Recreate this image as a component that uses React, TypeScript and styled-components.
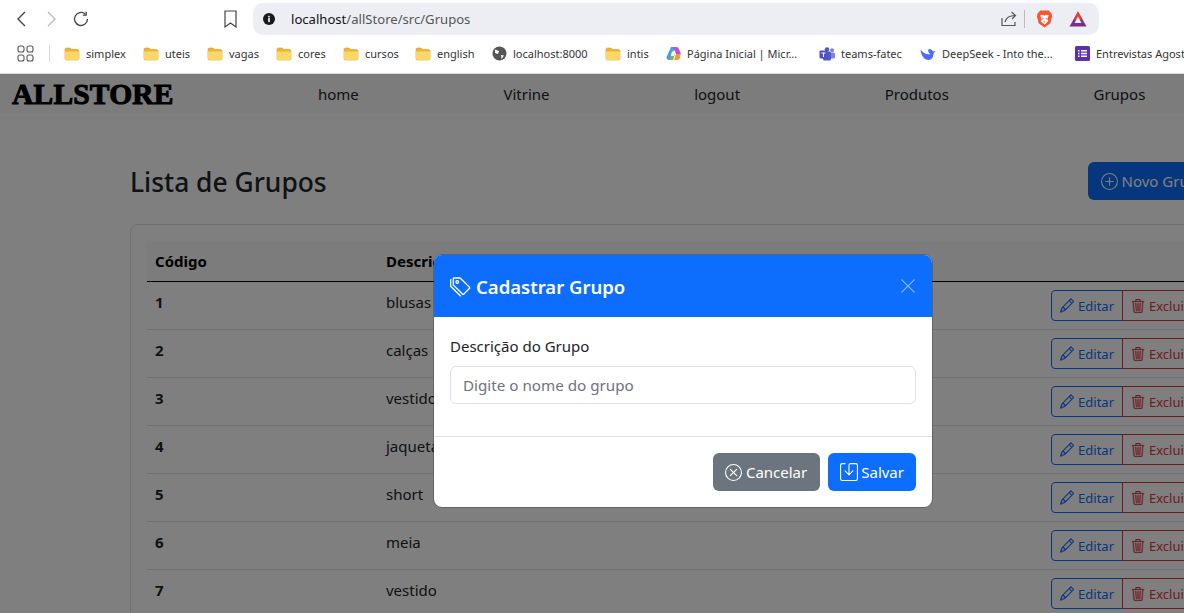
import { createGlobalStyle } from "styled-components";
import styled from "styled-components";
import { BsPencil, BsPlusCircle, BsSave, BsTags, BsTrash3, BsXCircle, BsXLg } from "react-icons/bs";

const GlobalStyle = createGlobalStyle`
  html, body {
    margin: 0;
    height: 100%;
    overflow: hidden;
    background: #fff;
  }
  body {
    font-family: "Noto Sans", "Liberation Sans", sans-serif;
  }
`;

const Shell = styled.div`
  width: 1184px;
  height: 613px;
  display: flex;
  flex-direction: column;
  overflow: hidden;
`;

const Toolbar = styled.div`
  height: 38px;
  flex: none;
  display: flex;
  align-items: center;
  padding-left: 14px;
  background: #fff;
`;

const NavButtons = styled.div`
  width: 239px;
  display: flex;
  align-items: center;
  gap: 13px;
`;

const BookmarkStar = styled.svg`
  margin-left: auto;
  margin-right: 16px;
`;

const AddressBar = styled.div`
  width: 846px;
  height: 32px;
  border-radius: 10px;
  background: #edeef3;
  display: flex;
  align-items: center;
  padding: 0 12px 0 10px;
  box-sizing: border-box;
  font-size: 13.1px;
  color: #555;
`;

const Url = styled.span`
  margin-left: 16px;
  flex: 1;
  b {
    font-weight: 400;
    color: #111;
  }
`;

const BarDivider = styled.span`
  width: 1px;
  height: 18px;
  background: #bbb;
  margin: 0 11px 0 6px;
`;

const TriangleLogo = styled.svg`
  margin-left: 16px;
`;

const Bookmarks = styled.div`
  height: 36px;
  flex: none;
  display: flex;
  align-items: center;
  padding: 0 0 4px 17px;
  background: #fff;
  border-bottom: 1px solid #d9d9d9;
  box-sizing: border-box;
  font-size: 11px;
  color: #333;
  white-space: nowrap;
  svg {
    flex: none;
  }
`;

const AppsIcon = styled.svg`
  margin-right: 15px;
`;

const BookmarkSeparator = styled.span`
  width: 1px;
  height: 17px;
  flex: none;
  background: #d5d5d5;
  margin-right: 14px;
`;

const BookmarkItem = styled.span<{ $w: number }>`
  width: ${(p) => p.$w}px;
  flex: none;
  display: flex;
  align-items: center;
  gap: 6px;
`;

const Page = styled.div`
  position: relative;
  flex: 1;
  background: #fff;
  overflow: hidden;
  color: #212529;
`;

const Navbar = styled.nav`
  height: 39px;
  display: flex;
  align-items: center;
  padding-left: 12px;
  background: #f8f9fa;
`;

const Logo = styled.span`
  width: 306px;
  flex: none;
  margin-top: 2px;
  font-family: "Liberation Serif", serif;
  font-weight: 700;
  font-size: 29.5px;
  letter-spacing: 0.2px;
  color: #000;
  -webkit-text-stroke: 1px #000;
`;

const NavLinks = styled.div`
  display: flex;
  gap: 144.6px;
  font-size: 15px;
  white-space: nowrap;
`;

const Content = styled.main`
  width: 1200px;
  margin-left: 130px;
  padding-top: 47px;
`;

const TitleRow = styled.div`
  height: 64px;
  display: flex;
  justify-content: space-between;
  align-items: flex-start;
`;

const Title = styled.h2`
  margin: 0;
  font-size: 26.4px;
  font-weight: 500;
  line-height: 44px;
`;

const NewButton = styled.button`
  margin: 2px 110px 0 0;
  height: 38px;
  padding: 0 13px;
  display: flex;
  align-items: center;
  gap: 4px;
  border: none;
  border-radius: 6px;
  background: #0d6efd;
  color: #fff;
  font: inherit;
  font-size: 15px;
  white-space: nowrap;
`;

const Card = styled.section`
  border: 1px solid #dee2e6;
  border-radius: 8px;
  padding: 16px;
  height: 500px;
  box-sizing: border-box;
`;

const Table = styled.div`
  font-size: 15px;
`;

const Row = styled.div`
  height: 48px;
  display: grid;
  grid-template-columns: 231px 665px auto;
  align-items: center;
  padding-left: 8px;
  box-sizing: border-box;
  border-bottom: 1px solid #dee2e6;
`;

const HeadRow = styled(Row)`
  height: 41px;
  padding-bottom: 1px;
  background: #f8f9fa;
  font-weight: 700;
  color: #000;
  border-bottom-color: #000;
`;

const Cell = styled.span<{ $bold?: boolean }>`
  margin-bottom: 8px;
  font-weight: ${(p) => (p.$bold ? 700 : 400)};
`;

const Actions = styled.div`
  display: flex;
  svg {
    stroke: currentColor;
    stroke-width: 0.35px;
  }
`;

const ActionButton = styled.button<{ $danger?: boolean }>`
  height: 31px;
  width: ${(p) => (p.$danger ? "90px" : "72px")};
  display: flex;
  align-items: center;
  gap: 4px;
  padding: 0 8px;
  box-sizing: border-box;
  background: transparent;
  border: 1px solid ${(p) => (p.$danger ? "#dc3545" : "#0d6efd")};
  border-radius: ${(p) => (p.$danger ? "0 4px 4px 0" : "4px 0 0 4px")};
  margin-left: ${(p) => (p.$danger ? "-1px" : "0")};
  color: ${(p) => (p.$danger ? "#dc3545" : "#0d6efd")};
  font: inherit;
  font-size: 13px;
  white-space: nowrap;
`;

const Backdrop = styled.div`
  position: absolute;
  inset: 0;
  background: rgba(0, 0, 0, 0.5);
`;

const Modal = styled.div`
  position: absolute;
  left: 434px;
  top: 181px;
  width: 498px;
  border-radius: 8px;
  background: #fff;
  overflow: hidden;
  box-shadow: 0 0 0 1px rgba(0, 0, 0, 0.2);
`;

const ModalHeader = styled.header`
  height: 62px;
  display: flex;
  align-items: center;
  padding: 0 15px 0 16px;
  background: #0d6efd;
  color: #fff;
`;

const ModalTitle = styled.h5`
  flex: 1;
  margin: 0;
  display: flex;
  align-items: center;
  gap: 5px;
  font-size: 18.5px;
  font-weight: 600;
`;

const CloseIcon = styled(BsXLg)`
  font-size: 18px;
  opacity: 0.55;
`;

const ModalBody = styled.div`
  padding: 17px 16px 32px;
  height: 119px;
  box-sizing: border-box;
`;

const Label = styled.label`
  display: block;
  font-size: 15px;
  line-height: 24px;
  margin-bottom: 8px;
`;

const Input = styled.input`
  display: block;
  width: 100%;
  height: 38px;
  box-sizing: border-box;
  padding: 0 12px;
  border: 1px solid #dee2e6;
  border-radius: 6px;
  font: inherit;
  font-size: 15.2px;
  &::placeholder {
    color: #6c757d;
    opacity: 1;
  }
`;

const ModalFooter = styled.footer`
  height: 71px;
  display: flex;
  justify-content: flex-end;
  align-items: center;
  gap: 8px;
  padding: 0 16px;
  border-top: 1px solid #dee2e6;
  box-sizing: border-box;
`;

const FooterButton = styled.button<{ $secondary?: boolean }>`
  height: 38px;
  display: flex;
  align-items: center;
  gap: ${(p) => (p.$secondary ? "4px" : "3px")};
  padding: ${(p) => (p.$secondary ? "0 13px 0 12px" : "0 12px")};
  border: none;
  border-radius: 6px;
  background: ${(p) => (p.$secondary ? "#6c757d" : "#0d6efd")};
  color: #fff;
  font: inherit;
  font-size: 15px;
`;

const Folder = () => (
  <svg width="16" height="14" viewBox="0 0 16 14">
    <path d="M1 2.5A1.5 1.5 0 0 1 2.5 1h3.6l1.6 1.6h5.8A1.5 1.5 0 0 1 15 4.1v7.4a1.5 1.5 0 0 1-1.5 1.5h-11A1.5 1.5 0 0 1 1 11.5z" fill="#eeb52f" stroke="#d39a28" strokeWidth="0.6" />
    <path d="M1 4.6h14v6.9a1.5 1.5 0 0 1-1.5 1.5h-11A1.5 1.5 0 0 1 1 11.5z" fill="#fbd765" />
  </svg>
);

const bookmarks: [string, number][] = [
  ["simplex", 79],
  ["uteis", 64],
  ["vagas", 69],
  ["cores", 67],
  ["cursos", 72],
];

const rows = ["blusas", "calças", "vestido", "jaqueta", "short", "meia", "vestido"];

const App = () => {
  return (
    <Shell>
      <GlobalStyle />
      <Toolbar>
        <NavButtons>
          <svg width="16" height="18" viewBox="0 0 16 18" fill="none" stroke="#444" strokeWidth="1.4">
            <path d="M11 2 4 9l7 7" />
          </svg>
          <svg width="16" height="18" viewBox="0 0 16 18" fill="none" stroke="#bbb" strokeWidth="1.4">
            <path d="m5 2 7 7-7 7" />
          </svg>
          <svg width="18" height="18" viewBox="0 0 18 18" fill="none" stroke="#444" strokeWidth="1.3">
            <path d="M15.5 9a6.5 6.5 0 1 1-2.2-4.9" />
            <path d="M14.2 1.8v3.4h-3.4" />
          </svg>
          <BookmarkStar width="13" height="18" viewBox="0 0 13 18" fill="none" stroke="#444" strokeWidth="1.2">
            <path d="M1 1h11v16l-5.5-4L1 17z" />
          </BookmarkStar>
        </NavButtons>
        <AddressBar>
          <svg width="12" height="12" viewBox="0 0 12 12">
            <circle cx="6" cy="6" r="6" fill="#1a1a1a" />
            <rect x="5.2" y="5" width="1.6" height="4" fill="#fff" />
            <rect x="5.2" y="2.8" width="1.6" height="1.5" fill="#fff" />
          </svg>
          <Url>
            <b>localhost</b>/allStore/src/Grupos
          </Url>
          <svg width="18" height="18" viewBox="0 0 18 18" fill="none" stroke="#555" strokeWidth="1.2">
            <path d="M2 8v7.5h13V12" />
            <path d="M5 12c1-4 4-6.5 10-6.5M11.5 2 15.5 5.5 12 9" />
          </svg>
          <BarDivider />
          <svg width="17" height="20" viewBox="0 0 18 20">
            <path d="M4.5 1h9L16.5 4.5 17 7l-1.8 7.5L9 19l-6.2-4.5L1 7l.5-2.5z" fill="#fb542b" />
            <path d="M4.5 6 7.5 5.5 9 6.5l1.5-1 3 .5-1.5 4.5 1 1.5L9 16l-4-3.5 1-1.5z" fill="#fff" />
            <path d="M6.5 8.5 8 9.5 7 11zM11.5 8.5 10 9.5l1 1.5zM8 12.5h2L9 14z" fill="#fb542b" />
          </svg>
          <TriangleLogo width="18" height="16" viewBox="0 0 18 16">
            <path d="M9 0.5 17.5 15.5H0.5z" fill="#7b2d8e" />
            <path d="M9 0.5 13.5 8.5H4.5z" fill="#e8432e" />
            <path d="M9 5.5 12.5 12H5.5z" fill="#edeef3" />
          </TriangleLogo>
        </AddressBar>
      </Toolbar>
      <Bookmarks>
        <AppsIcon width="17" height="17" viewBox="0 0 17 17" fill="none" stroke="#555" strokeWidth="1.1">
          <rect x="1" y="1" width="6" height="6" rx="2" />
          <rect x="10" y="1" width="6" height="6" rx="2" />
          <rect x="1" y="10" width="6" height="6" rx="2" />
          <rect x="10" y="10" width="6" height="6" rx="2" />
        </AppsIcon>
        <BookmarkSeparator />
        {bookmarks.map(([name, w]) => (
          <BookmarkItem key={name} $w={w}>
            <Folder />
            {name}
          </BookmarkItem>
        ))}
        <BookmarkItem $w={77}>
          <Folder />
          english
        </BookmarkItem>
        <BookmarkItem $w={113}>
          <svg width="15" height="15" viewBox="0 0 15 15">
            <circle cx="7.5" cy="7.5" r="7" fill="#555" />
            <path d="M3 3.5 7 5 6 8 3 7zM9 9l3 .5-2.5 3.5z" fill="#fff" />
          </svg>
          localhost:8000
        </BookmarkItem>
        <BookmarkItem $w={61}>
          <Folder />
          intis
        </BookmarkItem>
        <BookmarkItem $w={153}>
          <svg width="15" height="15" viewBox="0 0 15 15">
            <path d="M5 1h4l-2 6-2.5 7H3a2.5 2.5 0 0 1-2.4-3z" fill="#4a9be8" />
            <path d="M3 14l2-6h4l-2 6z" fill="#6fc04a" />
            <path d="M7 1h3.5a2.5 2.5 0 0 1 2.4 2L15 8h-5z" fill="#c04fd1" />
            <path d="M8 14h3.5a2.5 2.5 0 0 0 2.4-2l.6-4H10z" fill="#f29a3b" />
            <path d="M6 5.5h3.5L8 10H4.8z" fill="#fff" />
          </svg>
          Página Inicial | Micr...
        </BookmarkItem>
        <BookmarkItem $w={101}>
          <svg width="16" height="14" viewBox="0 0 16 14">
            <circle cx="13" cy="3.2" r="2" fill="#7b83eb" />
            <rect x="10" y="5.5" width="6" height="6" rx="1.5" fill="#7b83eb" />
            <circle cx="8" cy="2.5" r="2.3" fill="#5059c9" />
            <rect x="4" y="4.5" width="8" height="9" rx="1.5" fill="#5059c9" />
            <rect x="0.5" y="3.5" width="8" height="8" rx="1" fill="#4b53bc" />
            <path d="M2.5 5.5h4v1H5v3.5H4V6.5H2.5z" fill="#fff" />
          </svg>
          teams-fatec
        </BookmarkItem>
        <BookmarkItem $w={155}>
          <svg width="16" height="14" viewBox="0 0 16 14">
            <path d="M0.5 2.5C1 8 4 13 8.5 13c3.5 0 5-3.5 5-6.5l2-2.5-2.5.5C12 2.5 10 1 8.5 2.5 7.5 4 9 6.5 10.5 7 7 8 3 6 0.5 2.5z" fill="#4d6bfe" />
          </svg>
          DeepSeek - Into the...
        </BookmarkItem>
        <BookmarkItem $w={130}>
          <svg width="15" height="15" viewBox="0 0 15 15">
            <rect width="15" height="15" rx="1.5" fill="#5c2fb5" />
            <path d="M3 4h1.5v1.4H3zM6 4h6v1.4H6zM3 6.8h1.5v1.4H3zM6 6.8h6v1.4H6zM3 9.6h1.5V11H3zM6 9.6h6V11H6z" fill="#fff" />
          </svg>
          Entrevistas Agost
        </BookmarkItem>
      </Bookmarks>
      <Page>
        <Navbar>
          <Logo>ALLSTORE</Logo>
          <NavLinks>
            <span>home</span>
            <span>Vitrine</span>
            <span>logout</span>
            <span>Produtos</span>
            <span>Grupos</span>
          </NavLinks>
        </Navbar>
        <Content>
          <TitleRow>
            <Title>Lista de Grupos</Title>
            <NewButton>
              <BsPlusCircle size={17} /> Novo Grupo
            </NewButton>
          </TitleRow>
          <Card>
            <Table>
              <HeadRow>
                <span>Código</span>
                <span>Descrição</span>
                <span />
              </HeadRow>
              {rows.map((name, i) => (
                <Row key={i}>
                  <Cell $bold>{i + 1}</Cell>
                  <Cell>{name}</Cell>
                  <Actions>
                    <ActionButton>
                      <BsPencil size={15} /> Editar
                    </ActionButton>
                    <ActionButton $danger>
                      <BsTrash3 size={14} /> Excluir
                    </ActionButton>
                  </Actions>
                </Row>
              ))}
            </Table>
          </Card>
        </Content>
        <Backdrop />
        <Modal>
          <ModalHeader>
            <ModalTitle>
              <BsTags size={21} /> Cadastrar Grupo
            </ModalTitle>
            <CloseIcon />
          </ModalHeader>
          <ModalBody>
            <Label>Descrição do Grupo</Label>
            <Input placeholder="Digite o nome do grupo" />
          </ModalBody>
          <ModalFooter>
            <FooterButton $secondary>
              <BsXCircle size={17} /> Cancelar
            </FooterButton>
            <FooterButton>
              <BsSave size={18} /> Salvar
            </FooterButton>
          </ModalFooter>
        </Modal>
      </Page>
    </Shell>
  );
};

export default App;
